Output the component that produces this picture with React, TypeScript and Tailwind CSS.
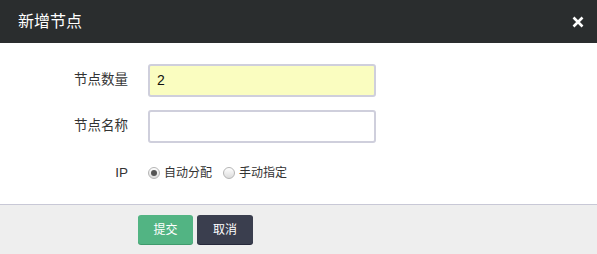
import React from "react";

const font = { fontFamily: '"Liberation Sans", "Noto Sans CJK SC", sans-serif' };

function Radio({ checked, label }: { checked: boolean; label: string }) {
  return (
    <label className="flex items-center gap-[4px] text-[12px] text-[#333]">
      <span className="w-[12px] h-[12px] rounded-full border border-[#b5b5b5] bg-gradient-to-b from-[#fff] to-[#dcdcdc] flex items-center justify-center">
        {checked && <span className="w-[6px] h-[6px] rounded-full bg-[#555]" />}
      </span>
      <span>{label}</span>
    </label>
  );
}

export default function App() {
  return (
    <div className="w-[597px] h-[254px] bg-white flex flex-col" style={font}>
      <div className="h-[43px] bg-[#2a2d2e] flex items-center justify-between pl-[18px] pr-[13px]">
        <span className="text-white text-[16px]">新增节点</span>
        <svg width="12" height="12" viewBox="0 0 12 12">
          <path d="M1.5 1.5 L10.5 10.5 M10.5 1.5 L1.5 10.5" stroke="#fff" strokeWidth="2.6" />
        </svg>
      </div>
      <div className="flex-1 flex flex-col pt-[21px]">
        <div className="flex items-center h-[33px]">
          <div className="w-[128px] text-right text-[13.5px] text-[#333]">节点数量</div>
          <div className="ml-[20px] w-[228px] h-[33px] border-2 border-[#cfcfdc] rounded-[3px] bg-[#fafdc0] flex items-center px-[7px] text-[14px] text-[#111]">2</div>
        </div>
        <div className="flex items-center h-[33px] mt-[13px]">
          <div className="w-[128px] text-right text-[13.5px] text-[#333]">节点名称</div>
          <div className="ml-[20px] w-[228px] h-[33px] border-2 border-[#cfcfdc] rounded-[3px] bg-white" />
        </div>
        <div className="flex items-center h-[26px] mt-[17px]">
          <div className="w-[128px] text-right text-[13.5px] text-[#333]">IP</div>
          <div className="ml-[20px] flex items-center gap-[11px]">
            <Radio checked label="自动分配" />
            <Radio checked={false} label="手动指定" />
          </div>
        </div>
      </div>
      <div className="h-[50px] bg-[#eeeeee] border-t border-[#c8c8d6] flex items-start pt-[10px] pl-[138px] gap-[4px]">
        <button className="w-[55px] h-[29px] rounded-[3px] bg-[#52b483] text-white text-[12px] shadow-[0_1px_0_#3f9a6c]">提交</button>
        <button className="w-[56px] h-[29px] rounded-[3px] bg-[#3a3e4e] text-white text-[12px] shadow-[0_1px_0_#25283a]">取消</button>
      </div>
    </div>
  );
}
